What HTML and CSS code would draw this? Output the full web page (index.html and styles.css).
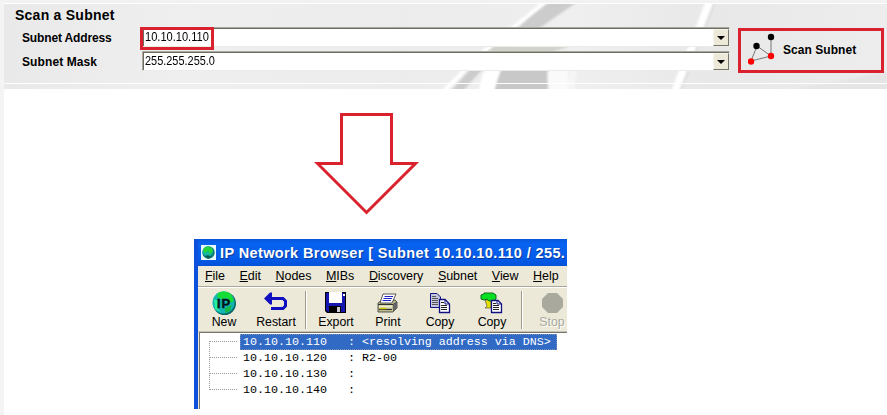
FILE: index.html
```html
<!DOCTYPE html>
<html lang="en">
<head>
<meta charset="utf-8">
<title>Scan a Subnet</title>
<link rel="stylesheet" href="styles.css">
</head>
<body>
<section class="scan">
  <svg class="streaks" width="883" height="86" viewBox="4 3 883 86">
    <defs>
      <linearGradient id="base"><stop offset="0" stop-color="#e9e9e9"/><stop offset=".2" stop-color="#efefef"/><stop offset=".45" stop-color="#ececec"/><stop offset=".65" stop-color="#efefef"/><stop offset=".8" stop-color="#e8e8e8"/><stop offset="1" stop-color="#ededed"/></linearGradient>
      <filter id="soft"><feGaussianBlur stdDeviation=".8"/></filter>
    </defs>
    <rect x="4" y="3" width="883" height="86" fill="url(#base)"/>
    <g filter="url(#soft)">
      <path d="M547 0H580L541 27L480 72L462 92H450L486 51L520 26Z" fill="#cccccc"/>
      <path d="M548 0L514 27L480 55L444 91" fill="none" stroke="#fff" stroke-width="4"/>
      <path d="M500 68H548V92H492Z" fill="#c8c8c8"/>
      <path d="M496 46H570L550 53H488Z" fill="#d2d2cd"/>
      <path d="M485 70H501Q497 80 494 92H479Q480 79 485 70Z" fill="#fff"/>
      <path d="M548 70H568V92H550Q546 80 548 70Z" fill="#fafafa"/>
      <path d="M570 70H577L574 92H567Z" fill="#f5f5f5"/>
      <path d="M710 1L675 92" stroke="#fff" stroke-width="8" fill="none"/>
      <path d="M715 1L680 92" stroke="#d9d9d9" stroke-width="2" fill="none"/>
      <path d="M780 92L887 72V92Z" fill="#e5e5e5"/>
    </g>
    <path d="M4 3.5H887M4 83.5H887" stroke="#fff"/>
  </svg>
  <div class="form">
    <h1><span>Scan a Subnet</span></h1>
    <label class="l1">Subnet Address</label>
    <div class="combo"><span class="val marked"><b class="ip">10.10.10.110</b></span><i class="drop"></i></div>
    <label class="l2">Subnet Mask</label>
    <div class="combo"><span class="val"><b class="mask">255.255.255.0</b></span><i class="drop"></i></div>
  </div>
  <div class="scanbtn">
    <svg width="28" height="32" viewBox="748 33 28 32"><path d="M771 37V56L751 61L757 46L771 56" fill="none" stroke="#777"/><circle cx="771" cy="37" r="3.2"/><circle cx="756.500" cy="46" r="3.2"/><circle cx="771" cy="56" r="3.2" fill="#f00"/><circle cx="751" cy="61.500" r="3.200" fill="#f00"/></svg>
    <span>Scan Subnet</span>
  </div>
</section>
<svg class="arrow" width="106" height="106" viewBox="314 111 106 106"><path d="M341.500 114.500H391.500V163.500H415.500L366.500 212.500L317.500 163.500H341.500Z" fill="#fff" stroke="#d9222d" stroke-width="3"/></svg>
<section class="window">
  <header>
    <svg width="15" height="15" viewBox="0 0 15 15"><path d="M0 0H15V15H0Z" fill="#e9fbfa"/><circle cx="7.500" cy="7.500" r="6.200" fill="#087a80"/><circle cx="6.700" cy="6.500" r="5" fill="#12b8a2"/><path d="M3 3Q7 0 11 3L12 7L9 9L7 6L4 8L2 6Z" fill="#23d43c"/><path d="M4 11Q8 9 10 12L7 14Z" fill="#075a50"/></svg>
    <span>IP Network Browser [ Subnet 10.10.10.110 / 255.</span>
  </header>
  <nav>
    <span><u>F</u>ile</span><span><u>E</u>dit</span><span><u>N</u>odes</span><span><u>M</u>IBs</span><span><u>D</u>iscovery</span><span><u>S</u>ubnet</span><span><u>V</u>iew</span><span><u>H</u>elp</span>
  </nav>
  <div class="tools">
    <div class="tool"><svg width="26" height="26" viewBox="0 0 26 26"><circle cx="13.500" cy="13.500" r="11.500" fill="#086a67"/><circle cx="12.500" cy="12.500" r="11" fill="#12b5b2"/><path d="M7 3Q14-1 20 4L23 11L19 13L16 8L10 9L6 7Z" fill="#16dc35"/><path d="M3 9L7 11L6 18L10 22L4 19Z" fill="#25ef9a"/><path d="M14 18L21 15L19 21L14 23Z" fill="#14b849"/><text class="badge" x="6" y="18">IP</text></svg><span>New</span></div>
    <div class="tool"><svg width="26" height="26" viewBox="0 0 26 26"><path d="M6 8.500H20L22.500 11V16L20 18.500H8" fill="none" stroke="#1010c0" stroke-width="3"/><path d="M1 8.500L7 2.500H9V14.500H7Z" fill="#1010c0"/></svg><span>Restart</span></div>
    <i class="sep"></i>
    <div class="tool"><svg width="26" height="26" viewBox="0 0 26 26"><path d="M2 2H23V23H4L2 21Z" fill="#000"/><path d="M3 3H22V22H5L3 20Z" fill="#1515b0"/><path d="M6 2H19V13H6Z" fill="#fff"/><path d="M6 16H18V23H6Z" fill="#000"/><path d="M14 17H17V22H14Z" fill="#ccc"/><path d="M20 4H22V6H20Z" fill="#fff"/></svg><span>Export</span></div>
    <div class="tool"><svg width="26" height="26" viewBox="0 0 26 26"><path d="M3 13L7 10H20L22 12V18L18 22H3Z" fill="#bdbd91" stroke="#333" stroke-width=".8"/><path d="M8 4H21L17 13H5Z" fill="#fff" stroke="#333" stroke-width=".8"/><path d="M9.500 6.500H18M8.500 8.500H17M7.500 10.500H16" stroke="#22c"/><path d="M3 14.500H18L22 12M4 19.500H17" fill="none" stroke="#333"/><path d="M4 16.500H17" stroke="#f0f0cf" stroke-width="2"/><path d="M5 18.500H11" stroke="#d5c900" stroke-width="1.500"/><path d="M18 15L22 12V18L18 22Z" fill="#666"/></svg><span>Print</span></div>
    <div class="tool"><svg width="26" height="26" viewBox="0 0 26 26"><path d="M3.500 3.500H10L13.500 7V17.500H3.500Z" fill="#c6c6df" stroke="#101080"/><path d="M5 6.500H9M5 8.500H11M5 10.500H11M5 12.500H11M5 14.500H11" stroke="#555"/><path d="M12.500 9.500H18L22.500 14V22.500H12.500Z" fill="#fff" stroke="#101080" stroke-width="1.300"/><path d="M18 10V14H22" fill="none" stroke="#101080"/><path d="M14 12.500H17M14 15.500H20M14 17.500H20M14 19.500H20" stroke="#222"/></svg><span>Copy</span></div>
    <div class="tool"><svg width="26" height="26" viewBox="0 0 26 26"><path d="M6 10H12V18H6L8 16Z" fill="#e7df00" stroke="#555" stroke-width=".7"/><path d="M2 5L5 4V3H14L17 5V9L14 11H10L8 9L5 10L2 9Z" fill="#08df20" stroke="#087018"/><path d="M12.500 10.500H19L22.500 14V22.500H12.500Z" fill="#fff" stroke="#101080" stroke-width="1.300"/><path d="M18 10V14H22" fill="none" stroke="#101080"/><path d="M14 13.500H17M14 15.500H20M14 17.500H20M14 19.500H20" stroke="#222"/></svg><span>Copy</span></div>
    <i class="sep"></i>
    <div class="tool off"><svg width="26" height="26" viewBox="0 0 26 26"><path d="M9 3H18L24 9V17L18 23H9L3 17V9Z" fill="#aaa99d"/></svg><span>Stop</span></div>
  </div>
  <div class="results">
    <svg width="40" height="82" viewBox="199 333 40 82"><path d="M208.500 341V390M209 341.500H237M209 357.500H237M209 373.500H237M209 389.500H237" fill="none" stroke="#999" stroke-dasharray="1 1"/></svg>
    <div class="list">
      <pre class="sel">10.10.10.110   : &lt;resolving address via DNS&gt;</pre>
      <pre>10.10.10.120   : R2-00</pre>
      <pre>10.10.10.130   :</pre>
      <pre>10.10.10.140   :</pre>
    </div>
  </div>
</section>
</body>
</html>
```
FILE: styles.css
```css
* { box-sizing: border-box; }
body {
  margin: 0;
  width: 887px;
  height: 415px;
  overflow: hidden;
  background: #fff;
  border-left: 4px solid #f4f4f4;
  border-top: 3px solid #f2f2f2;
  font-family: "Liberation Sans", sans-serif;
  color: #000;
}
.scan {
  position: relative;
  height: 86px;
  display: flex;
  align-items: flex-start;
}
.streaks { position: absolute; inset: 0; z-index: -1; }
.form {
  width: 724px;
  margin-left: 10px;
  display: grid;
  grid-template-columns: 127px 588px;
  grid-template-rows: 24px 24px 24px;
}
h1 {
  grid-column: 1 / 3;
  margin: 0;
  padding-left: 1px;
  font-size: 14px;
  line-height: 24px;
  letter-spacing: .25px;
}
label {
  padding-left: 8px;
  font-size: 12px;
  font-weight: bold;
  line-height: 22px;
}
.l1 { letter-spacing: -.15px; }
.l2 { letter-spacing: .1px; }
.combo {
  display: flex;
  justify-content: space-between;
  width: 588px;
  height: 20px;
  margin-left: 1px;
  background: #fff;
  border: 1px solid #aaa99d;
  border-bottom-color: #ecebe5;
  border-right-color: #ecebe5;
  box-shadow: inset 1px 1px #6e6c62;
}
.val {
  display: block;
  width: 74px;
  height: 23px;
  padding: 1px 0 0 2px;
  line-height: 14px;
}
.marked {
  position: relative;
  left: -3px;
  top: -1px;
  padding: 0 0 0 2px;
  border: 3px solid #d9222d;
}
.val b {
  display: block;
  width: 80px;
  font-weight: normal;
  font-size: 13.5px;
  line-height: 15px;
  white-space: nowrap;
  transform-origin: 0 0;
}
.ip { transform: scaleX(.82); margin-top: -1px; }
.mask { transform: scaleX(.81); }
.drop {
  width: 16px;
  height: 17px;
  margin-top: 1px;
  background: #ece9d8;
  border: 1px solid;
  border-color: #f7f6ee #77756b #77756b #f7f6ee;
  display: flex;
  align-items: center;
  justify-content: center;
}
.drop::before {
  content: "";
  border: 4px solid transparent;
  border-top-color: #000;
  border-bottom: 0;
}
.scanbtn {
  width: 146px;
  height: 45px;
  margin-top: 25px;
  border: 3px solid #d9222d;
  display: flex;
  align-items: flex-start;
  padding: 2px 0 0 7px;
}
.scanbtn span {
  margin: 10px 0 0 7px;
  font-size: 12px;
  line-height: 14px;
  font-weight: bold;
  letter-spacing: .05px;
}
.arrow { display: block; margin: 22px 0 0 310px; }
.window {
  width: 373px;
  height: 170px;
  margin: 22px 0 0 190px;
  border-left: 4px solid #0c50db;
  background: #ece9d8;
  overflow: hidden;
}
header {
  height: 27px;
  display: flex;
  align-items: center;
  background: linear-gradient(#0757dd, #0763f1 20%, #055bea 70%, #0352d9);
  padding-left: 3px;
  color: #fff;
}
header span {
  margin-left: 4px;
  font-size: 14.5px;
  font-weight: bold;
  letter-spacing: .39px;
  white-space: pre;
  text-shadow: 1px 1px #093b9c;
}
nav {
  height: 20px;
  display: flex;
  gap: 14.600px;
  padding: 2px 0 0 7px;
  font-size: 12.5px;
  line-height: 16px;
  letter-spacing: -.05px;
}
nav u { text-underline-offset: 1px; }
.tools {
  height: 46px;
  border-top: 1px solid #aca899;
  box-shadow: inset 0 1px #fff;
  display: flex;
  border-bottom: 1px solid #c7c4b6;
}
.tool {
  flex: 0 0 52px;
  display: flex;
  flex-direction: column;
  align-items: center;
  padding-top: 3px;
  font-size: 12.3px;
  line-height: 13px;
}
.badge {
  font-size: 13px;
  font-weight: bold;
  letter-spacing: 1px;
  fill: #001818;
  stroke: #001818;
  stroke-width: .5px;
}
.off { color: #aaa99d; text-shadow: 1px 1px #fff; }
.sep {
  flex: 0 0 2px;
  margin: 4px 3px 0;
  height: 38px;
  border-left: 1px solid #9f9c90;
  border-right: 1px solid #fff;
}
.results {
  margin-left: 1px;
  height: 78px;
  border-top: 1px solid #77756b;
  border-left: 1px solid #77756b;
  background: #fff;
  display: flex;
}
.list { padding-top: 1px; }
pre {
  margin: 0;
  height: 16px;
  padding-left: 3px;
  font: 11.667px/16px "Liberation Mono", monospace;
}
.sel {
  width: 317px;
  background: #316ac5;
  outline: 1px dotted #7d92b8;
  outline-offset: -1px;
  color: #fff;
}
```
